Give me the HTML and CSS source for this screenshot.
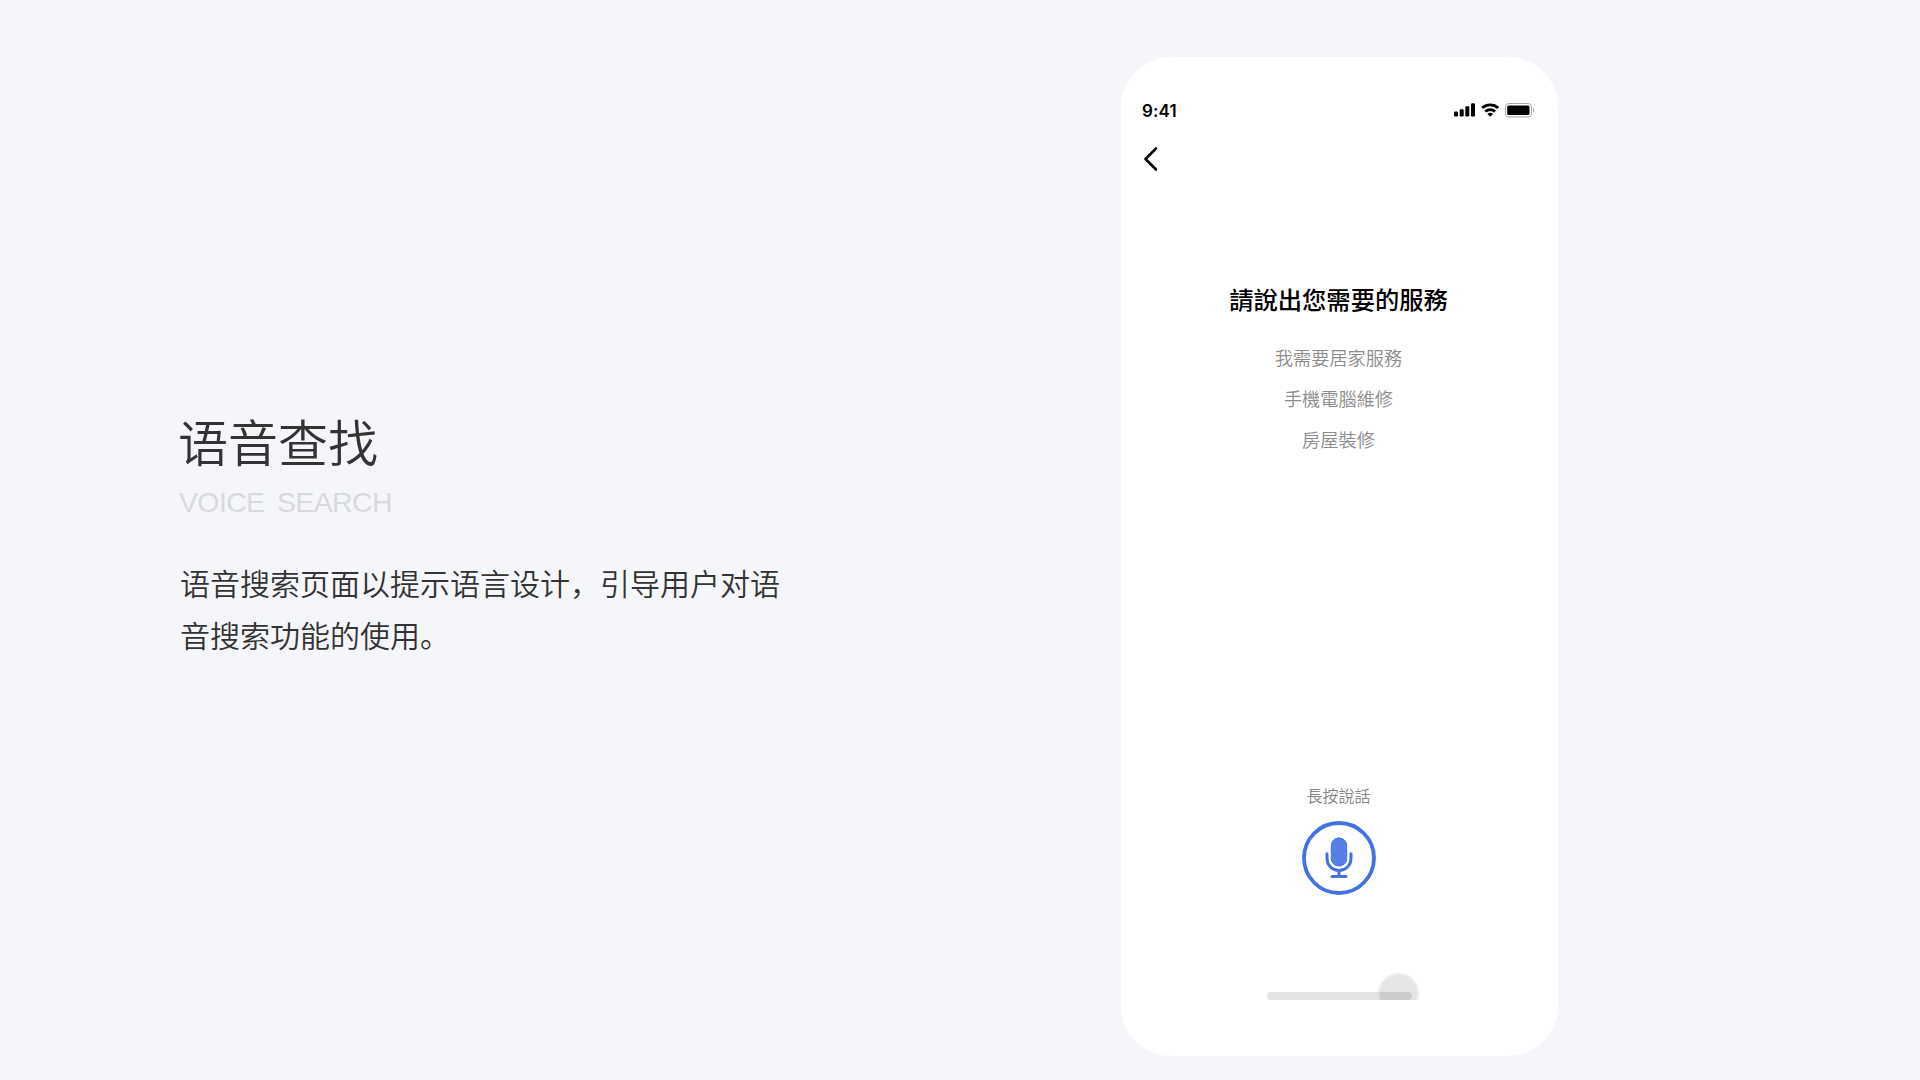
FILE: index.html
```
<!DOCTYPE html>
<html lang="zh-CN">

<head>
    <meta charset="UTF-8">
    <meta name="viewport" content="width=device-width, initial-scale=1.0">
    <title>语音查找</title>
    <link rel="stylesheet" href="styles.css">
</head>

<body>
    <section class="intro">
        <h1>语音查找</h1>
        <p class="subtitle">VOICE&nbsp; SEARCH</p>
        <p class="description">语音搜索页面以提示语言设计，引导用户对语音搜索功能的使用。</p>
    </section>

    <main class="phone" lang="zh-TW">
        <div class="screen">
            <div class="status-bar">
                <span class="time">9:41</span>
                <div class="status-icons">
                    <svg class="signal" width="22" height="14" viewBox="0 0 22 14">
                        <rect x="0" y="8.5" width="4" height="5" rx="1.2" />
                        <rect x="5.7" y="6.3" width="4" height="7.2" rx="1.2" />
                        <rect x="11.3" y="3.3" width="4" height="10.2" rx="1.2" />
                        <rect x="17" y="0.3" width="4" height="13.2" rx="1.2" />
                    </svg>
                    <svg class="wifi" width="20" height="14" viewBox="0 0 20 14">
                        <path d="M1.2 5a12 12 0 0 1 16 0M4.3 8.5a7.3 7.3 0 0 1 9.8 0" />
                        <path class="dot" d="M6.4 11a4.3 4.3 0 0 1 5.6 0L9.2 13.8z" />
                    </svg>
                    <svg class="battery" width="30" height="15" viewBox="0 0 30 15">
                        <rect class="frame" x="0.5" y="0.5" width="26" height="13.5" rx="3.4" />
                        <rect x="2.2" y="2.4" width="22.3" height="9.7" rx="1.5" />
                        <path class="cap" d="M28 5v4.5c1.7-.7 1.7-3.8 0-4.5z" />
                    </svg>
                </div>
            </div>

            <svg class="back" width="16" height="26" viewBox="0 0 16 26">
                <path d="M13 2.5 2.5 13 13 23.5" />
            </svg>

            <h2>請說出您需要的服務</h2>
            <ul class="examples">
                <li>我需要居家服務</li>
                <li>手機電腦維修</li>
                <li>房屋裝修</li>
            </ul>

            <div class="voice">
                <p>長按說話</p>
                <svg class="mic" width="74" height="74" viewBox="0 0 74 74">
                    <circle cx="37" cy="37" r="35" />
                    <rect x="29.3" y="17" width="15.4" height="28" rx="7.4" />
                    <path d="M25 32.8v4.7a12 12 0 0 0 24 0v-4.7M37 49.5v5.5M30 55.4h14" />
                </svg>
            </div>

            <div class="home-bar">
                <div class="touch"></div>
            </div>
        </div>
    </main>
</body>

</html>
```
FILE: styles.css
```
* {
    margin: 0;
    padding: 0;
    box-sizing: border-box;
}

body {
    width: 1920px;
    height: 1080px;
    display: flex;
    align-items: flex-start;
    overflow: hidden;
    background: #f5f6fa;
    color: #333;
    font-family: "Liberation Sans", "Noto Sans CJK SC", sans-serif;
}

.intro {
    width: 1121px;
    padding: 409px 0 0 179px;
}

h1 {
    margin-left: -1px;
    font-size: 50px;
    font-weight: 350;
    line-height: 72px;
}

.subtitle {
    margin-top: 3px;
    font-size: 28.5px;
    line-height: 36px;
    letter-spacing: -0.65px;
    word-spacing: -1px;
    color: #d8d9dd;
}

.description {
    width: 602px;
    margin: 39px 0 0 1px;
    font-size: 30px;
    font-weight: 350;
    line-height: 52px;
}

.phone {
    width: 437px;
    height: 999px;
    margin-top: 57px;
    border-radius: 50px;
    background: #fff;
    color: #000;
    font-family: Inter, "Noto Sans CJK TC", sans-serif;
}

.screen {
    height: 943px;
    padding-top: 43px;
    display: flex;
    flex-direction: column;
    overflow: hidden;
}

.status-bar {
    height: 22px;
    padding: 0 23px 0 21px;
    display: flex;
    justify-content: space-between;
}

.time {
    font-size: 17px;
    font-weight: 600;
    line-height: 22px;
    letter-spacing: 0.1px;
}

.status-icons {
    display: flex;
    align-items: flex-start;
    padding-top: 2.5px;
}

.wifi {
    margin: 0 4px 0 5px;
    fill: none;
    stroke: #000;
    stroke-width: 2.8;
}

.wifi .dot {
    fill: #000;
    stroke: none;
}

.battery .frame {
    fill: none;
    stroke: #a6a6a6;
}

.battery .cap {
    fill: #a6a6a6;
}

.back {
    margin: 24px 0 0 22px;
    fill: none;
    stroke: #000;
    stroke-width: 2.6;
    stroke-linecap: round;
    stroke-linejoin: round;
}

h2 {
    margin: 110px 2px 0 0;
    font-size: 24.3px;
    font-weight: 500;
    line-height: 36px;
    text-align: center;
}

.examples {
    margin: 20px 2px 0 0;
    list-style: none;
    font-size: 18.2px;
    font-weight: 350;
    line-height: 41px;
    text-align: center;
    color: #8c8c8c;
}

.voice {
    margin: 323px 2px 0 0;
    display: flex;
    flex-direction: column;
    align-items: center;
}

.voice p {
    font-size: 16px;
    font-weight: 350;
    line-height: 24px;
    color: #858585;
}

.mic {
    margin-top: 13px;
    fill: none;
    stroke: #4272e2;
    stroke-width: 3.8;
    stroke-linecap: round;
}

.mic rect {
    fill: #5580e6;
    stroke-width: 1;
}

.mic path {
    stroke-width: 3;
}

.home-bar {
    position: relative;
    flex-shrink: 0;
    width: 145px;
    height: 8px;
    margin: auto 0 0 146px;
    border-radius: 4px;
    background: #e4e4e4;
}

/* finger indicator, cut off by the bottom of the screen */
.touch {
    position: absolute;
    left: 111px;
    top: -19px;
    width: 41px;
    height: 41px;
    border: 2px solid rgba(255, 255, 255, 0.25);
    border-radius: 50%;
    background: rgba(0, 0, 0, 0.1);
}
```
